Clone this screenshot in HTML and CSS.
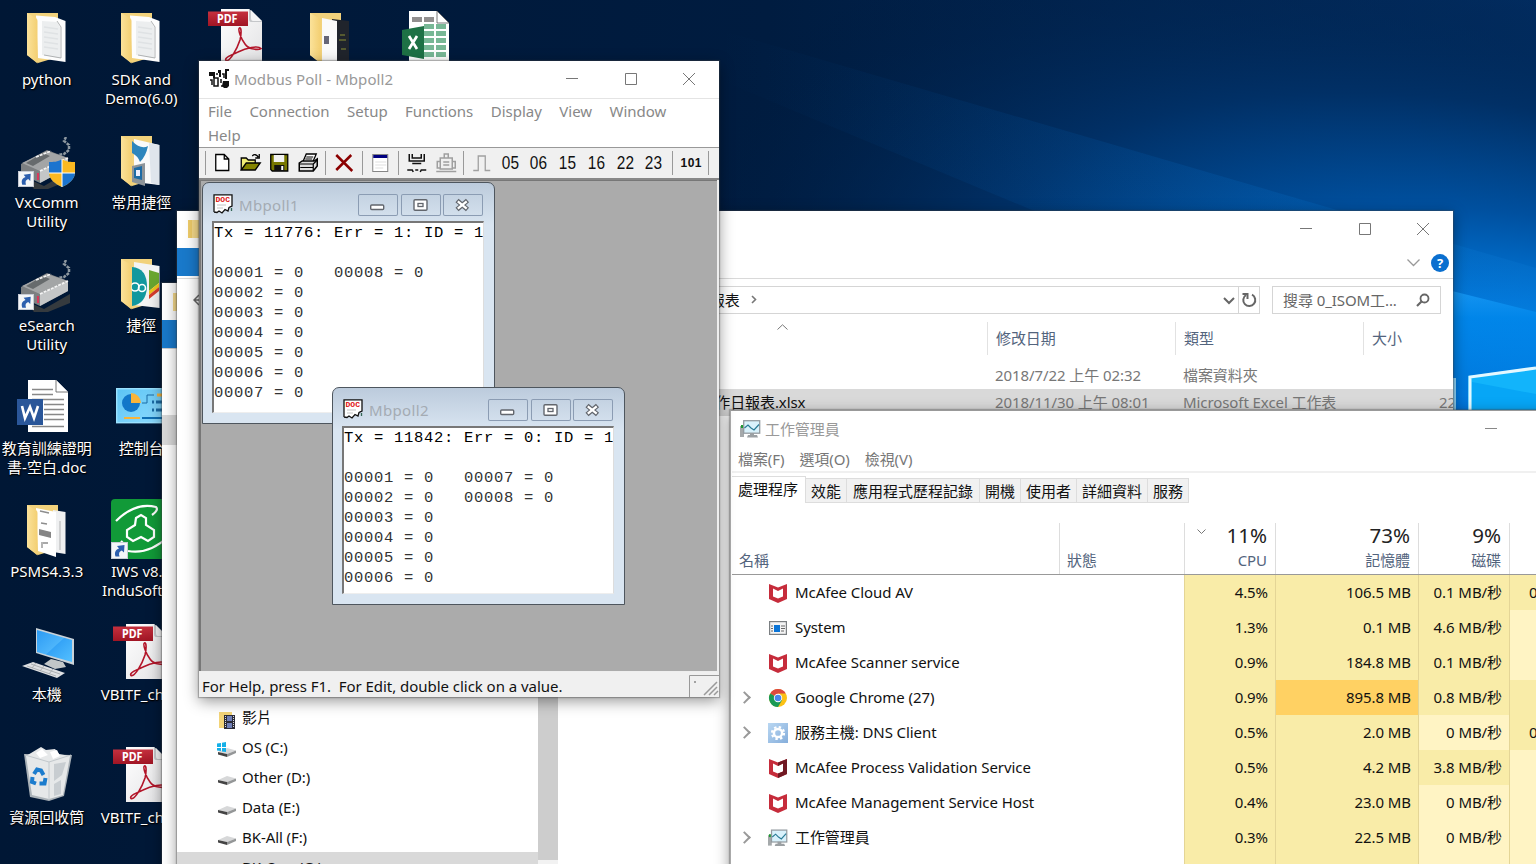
FILE: index.html
```html
<!DOCTYPE html>
<html lang="zh-Hant">
<head>
<meta charset="utf-8">
<title>Desktop</title>
<link rel="stylesheet" href="styles.css">
</head>
<body>
<svg class="defs" width="0" height="0" aria-hidden="true">
  <defs>
    <linearGradient id="gFolder" x1="0" x2="1"><stop offset="0" stop-color="#fbe29a"/><stop offset="1" stop-color="#f3cf72"/></linearGradient>
    <linearGradient id="gScreen" x1="0" y1="0" x2="1" y2="1"><stop offset="0" stop-color="#2b9af3"/><stop offset=".5" stop-color="#4db5fb"/><stop offset=".52" stop-color="#35a4f7"/><stop offset="1" stop-color="#54c0ff"/></linearGradient>
    <linearGradient id="gPage" x1="0" y1="0" x2="1" y2="1"><stop offset="0" stop-color="#fff"/><stop offset="1" stop-color="#e2e2e4"/></linearGradient>
    <linearGradient id="gPdf" x1="0" y1="0" x2="0" y2="1"><stop offset="0" stop-color="#c5303e"/><stop offset="1" stop-color="#a01524"/></linearGradient>
    <linearGradient id="gPanel" x1="0" y1="0" x2="1" y2="1"><stop offset="0" stop-color="#5cc4f4"/><stop offset="1" stop-color="#8fdcff"/></linearGradient>
    <linearGradient id="gGear" x1="0" y1="0" x2="1" y2="1"><stop offset="0" stop-color="#b9d7f2"/><stop offset="1" stop-color="#86aedb"/></linearGradient>
    <symbol id="shortcut" viewBox="0 0 17 17"><rect x=".5" y=".5" width="16" height="16" fill="#f4f6f8" stroke="#c9ced6"/><path d="M4.500 14.500C3 10 5 7.500 8 6.500L6 4L13.500 3L13 10.500L10.800 8.500C8 9.500 7.500 11.500 8.500 14.500Z" fill="#2c5fae"/></symbol>
    <symbol id="folderBack" viewBox="0 0 39 52"><path d="M0 0H31V44L11 50L0 42Z" fill="#f2d27c"/></symbol>
    <symbol id="folderFlap" viewBox="0 0 39 52"><path d="M0 0L9 5Q10.500 6 10.500 8V50.500L0 42Z" fill="url(#gFolder)"/></symbol>
    <symbol id="folder" viewBox="0 0 39 52"><use href="#folderBack"/><path d="M9 2.500L28 4L38.500 8V49L11 45Z" fill="#fdfdfd"/><path d="M15 8L30 9L33 14V45L15 42Z" fill="#eceeef"/><path d="M30 8L34 14V45L17 42" fill="none" stroke="#9d9fa1" stroke-width=".8"/><path d="M17 14L31 16M17 19L31 21M17 24L31 26M17 29L31 31M17 34L31 36" stroke="#dfe2e4" stroke-width="1.500"/><use href="#folderFlap"/></symbol>
    <symbol id="pdf" viewBox="0 0 54 56"><path d="M13 0H41L54.500 13V55H13Z" fill="url(#gPage)"/><path d="M41 0L54.500 13H43Q41 13 41 10Z" fill="#c5c7ca"/><path d="M43 1L54 12H45Q43 12 43 9Z" fill="#f4f4f5"/><rect y="2.500" width="40" height="14.500" fill="url(#gPdf)"/><text x="9" y="14" class="pdf-word" textLength="20.500" lengthAdjust="spacingAndGlyphs">PDF</text><path d="M31.500 19C29.500 20 33 30 37 35C41 41 51 41 53 39.500C50 36 38 39 30 43C23 46 16 49 18 51.500C22 53 29 40 32 31C33.500 25 33.500 18 31.500 19Z" fill="none" stroke="#b3162a" stroke-width="1.600"/></symbol>
    <symbol id="device" viewBox="0 0 52 52">
      <path d="M48 0L46 4L51 8L51 13L46 17L40 18" fill="none" stroke="#8d98a0" stroke-width="2.500" stroke-dasharray="3 1"/>
      <path d="M6 40L26 49L52 34V43L30 52H16Z" fill="#353a3e"/>
      <path d="M3 27L29 13L50 21V31L22 46L3 37Z" fill="#7c7f81"/><path d="M22 34L50 21V31L22 46Z" fill="#c4c6c7"/><path d="M4 26L29 14L50 21L22 34Z" fill="#a3a5a6"/><path d="M8 26L25 16L32 19L15 29Z" fill="#676b6d"/><path d="M22 34L50 21M18 20L33 14" stroke="#f3f3f3" stroke-width="1.700" stroke-dasharray="3 1"/><path d="M20 36V43" stroke="#d8385c" stroke-width="2"/>
      <use href="#shortcut" x="0" y="34" width="16" height="16"/>
    </symbol>
    <symbol id="shield" viewBox="0 0 26 28"><path d="M13 0C9 3 4 3 0 3V13C0 20 6 25 13 28V0Z" fill="#1b74cf"/><path d="M13 0C17 3 22 3 26 3V13C26 20 20 25 13 28V0Z" fill="#fbb921"/><path d="M0 14H13V28C6 25 0 20 0 14Z" fill="#fbb921"/><path d="M26 14H13V28C20 25 26 20 26 14Z" fill="#1b74cf"/><path d="M13 0V28M0 14H26" stroke="#fff" stroke-width="1"/></symbol>
    <symbol id="drive" viewBox="0 0 18 9"><path d="M0 4L9 0L18 2.500L9 6Z" fill="#d7d8d9"/><path d="M0 4L9 6V9L0 6.500Z" fill="#444"/><path d="M9 6L18 2.500V5L9 9Z" fill="#949697"/></symbol>
    <symbol id="shieldM" viewBox="0 0 18 20"><path d="M0 1L9 4.500L18 1V16L9 20L0 16Z" fill="#c62c3b"/><path d="M4 5.500L9 8L14 5.500V13.500L9 15.500L4 13.500Z" fill="#fff"/></symbol>
    <symbol id="taskIcon" viewBox="0 0 21 18"><path d="M0 6H4V17H0Z" fill="#a5a9ab"/><path d="M1 5H3V8H1Z" fill="#1e9b32"/><rect x="3.700" y=".7" width="16" height="12.500" fill="#d8f1fb" stroke="#939ba0" stroke-width="1.300"/><path d="M4.500 8L8 5L11 8L14 10L19 4.500" fill="none" stroke="#287b96" stroke-width="1.200"/><path d="M10 13H14V15H17L18 17.500H7L8 15H10Z" fill="#9ba0a3"/></symbol>
    <symbol id="docIcon" viewBox="0 0 20 20"><path d="M1 .8H19V12L16 13.500L15 17L12 15.500L9 19L6 17L4 18.500L1 18Z" fill="#fff"/><path d="M1 18V.8H19V12L16 13.500L15 17L12 15.500L9 19L6 17L4 18.500L1 18" fill="none" stroke="#111" stroke-width="1.300"/><text x="2.500" y="8" class="doc-word" textLength="14.500" lengthAdjust="spacingAndGlyphs">DOC</text><path d="M4 11H13M4 14H10" stroke="#c4c4c4"/><path d="M18.500 14V17" stroke="#365" stroke-width="1.300"/></symbol>
    <symbol id="mMin" viewBox="0 0 40 22"><rect x="12.700" y="11" width="13" height="4.500" rx="1" fill="#fff" stroke="#62666d" stroke-width="1.400"/></symbol>
    <symbol id="mMax" viewBox="0 0 40 22"><rect x="13" y="5.700" width="13" height="10.500" rx="1" fill="#fff" stroke="#62666d" stroke-width="1.400"/><rect x="17" y="9.500" width="5" height="3" fill="#fff" stroke="#62666d" stroke-width="1.300"/></symbol>
    <symbol id="mClose" viewBox="0 0 40 22"><path d="M14 6.500L24.500 15.500M24.500 6.500L14 15.500" stroke="#62666d" stroke-width="4.800"/><path d="M14.800 7.300L23.700 14.700M23.700 7.300L14.800 14.700" stroke="#fff" stroke-width="2.300"/></symbol>
  </defs>
</svg>

<div class="screen">
  <svg class="wallpaper" viewBox="0 0 1536 864">
    <defs>
      <radialGradient id="w1" gradientUnits="userSpaceOnUse" cx="1560" cy="390" r="900" gradientTransform="translate(1560 390) rotate(14) scale(1 .46) translate(-1560 -390)"><stop offset="0" stop-color="#00a2ff"/><stop offset=".2" stop-color="#0078dc"/><stop offset=".4" stop-color="#00509f"/><stop offset=".65" stop-color="#013066"/><stop offset="1" stop-color="#001a3c" stop-opacity="0"/></radialGradient>
      <linearGradient id="w2" x1="0" x2="1"><stop offset="0" stop-color="#001735"/><stop offset=".5" stop-color="#001c40"/><stop offset="1" stop-color="#023068"/></linearGradient>
      <linearGradient id="w3" x1="0" x2="1"><stop offset="0" stop-color="#0060b8" stop-opacity="0"/><stop offset="1" stop-color="#0a78d2" stop-opacity=".3"/></linearGradient>
      <linearGradient id="w4" x1="0" y1="0" x2="0" y2="1"><stop offset="0" stop-color="#27a9ff"/><stop offset=".3" stop-color="#0088ed"/><stop offset="1" stop-color="#006fd6"/></linearGradient>
    </defs>
    <rect width="1536" height="864" fill="url(#w2)"/>
    <rect width="1536" height="864" fill="url(#w1)"/>
    <path d="M720 30L1536 268V420L720 80Z" fill="url(#w3)"/>
    <path d="M1400 278L1536 312V412H1400Z" fill="url(#w4)" opacity=".75"/>
    <path d="M1453 378H1456V412H1453Z" fill="#8fd9ff"/>
    <path d="M1468 376L1536 367V412H1468Z" fill="#12b4fb"/>
    <path d="M1472 382L1536 394V412H1472Z" fill="#07a6f6"/>
    <path d="M1470 412V377L1536 368" fill="none" stroke="#e4f8ff" stroke-width="3"/>
  </svg>

  <div class="desktop">
    <div class="shortcut"><div class="pic"><svg class="i-folder" viewBox="0 0 39 52"><use href="#folder"/></svg></div><span>python</span></div>
    <div class="shortcut"><div class="pic"><svg class="i-folder" viewBox="0 0 39 52"><use href="#folder"/></svg></div><span>SDK and<br>Demo(6.0)</span></div>
    <div class="shortcut"><div class="pic"><svg class="i-pdf" viewBox="0 0 54 56"><use href="#pdf"/></svg></div></div>
    <div class="shortcut"><div class="pic"><svg class="i-folder" viewBox="0 0 39 52"><use href="#folderBack"/><path d="M22 6L39 8V52H22Z" fill="#20242c"/><path d="M30 22H35M29 27H36M31 36H36" stroke="#8a8f35"/><path d="M12 5L27 8V52H12Z" fill="#fafafa"/><rect x="14" y="23" width="5" height="8" fill="#667"/><use href="#folderFlap"/></svg></div></div>
    <div class="shortcut"><div class="pic"><svg class="i-xls" viewBox="0 0 47 52"><path d="M7 0H35L47 12V52H7Z" fill="#fff"/><path d="M35 0V12H47Z" fill="#fff" stroke="#555" stroke-width=".8"/><path d="M10 6H20V11H10ZM22 6H32V11H22Z" fill="#928f8f"/><path d="M22 13H32V18H22ZM34 13H44V18H34ZM22 20H32V25H22ZM34 20H44V25H34ZM22 27H32V32H22ZM34 27H44V32H34ZM22 34H32V39H22ZM34 34H44V39H34ZM22 41H32V46H22ZM34 41H44V46H34Z" fill="#77b795"/><path d="M0 19L22 15V48L0 44Z" fill="#1e7145"/><path d="M7 25L15 38M15 25L7 38" stroke="#fff" stroke-width="2.700"/></svg></div></div>

    <div class="shortcut"><div class="pic"><svg class="i-device" viewBox="0 0 58 52"><use href="#device" width="54" height="52"/><use href="#shield" x="32" y="22" width="26" height="28"/></svg></div><span>VxComm<br>Utility</span></div>
    <div class="shortcut"><div class="pic"><svg class="i-folder" viewBox="0 0 39 52"><use href="#folderBack"/><path d="M13 3L38.500 9V49L13 46Z" fill="#fafafa"/><path d="M28 7L38 9V49L30 47Z" fill="#dfe5ec"/><path d="M11 5Q20 14 27 10Q25 20 19 26Q17 20 11 17Z" fill="#2e86bd"/><path d="M11 30L24 27V50L11 46Z" fill="#8e9499"/><path d="M13 32L21 30V44L13 42Z" fill="#1d6ba5"/><path d="M15 34H19V40H15Z" fill="#eef"/><use href="#folderFlap"/></svg></div><span>常用捷徑</span></div>
    <i></i><i></i><i></i>

    <div class="shortcut"><div class="pic"><svg class="i-device" viewBox="0 0 58 52"><use href="#device" width="54" height="52"/></svg></div><span>eSearch<br>Utility</span></div>
    <div class="shortcut"><div class="pic"><svg class="i-folder" viewBox="0 0 39 52"><use href="#folderBack"/><path d="M13 3L38.500 7V49L13 46Z" fill="#f4f4f4"/><path d="M28 11L38 14V24L28 32Z" fill="#69a52f"/><path d="M28 32L38 24V28L28 36Z" fill="#f0c419"/><path d="M28 36L38 28V32L28 40Z" fill="#d83b2b"/><path d="M11 8Q26 9 26 28Q25 45 11 47Z" fill="#12989e"/><circle cx="14" cy="28" r="4" fill="none" stroke="#fff" stroke-width="1.600"/><circle cx="21" cy="29" r="3.500" fill="none" stroke="#fff" stroke-width="1.600"/><use href="#folderFlap"/></svg></div><span>捷徑</span></div>
    <i></i><i></i><i></i>

    <div class="shortcut"><div class="pic"><svg class="i-doc" viewBox="0 0 51 52"><path d="M11 0H39L51 12V52H11Z" fill="#fff"/><path d="M39 0V12H51" fill="#fff" stroke="#555" stroke-width=".8"/><path d="M15 9.500H36M15 14.500H36M15 19.500H47M27 24.500H47M27 29.500H47M27 34.500H47M27 39.500H47M15 46.500H47" stroke="#888" stroke-width="1.400"/><rect y="19" width="26" height="26" fill="#2a5699"/><path d="M5 26L8 38L13 27L17 38L21 26" fill="none" stroke="#fff" stroke-width="2.600"/></svg></div><span>教育訓練證明<br>書-空白.doc</span></div>
    <div class="shortcut"><div class="pic"><svg class="i-control" viewBox="0 0 50 36"><rect x=".7" y=".7" width="49" height="34" fill="url(#gPanel)" stroke="#9be2ff" stroke-width="1.400"/><circle cx="15" cy="15" r="9" fill="#1277c9"/><path d="M15 15V5A10 10 0 0 1 25 15Z" fill="#f8b43a"/><path d="M26 15H31V7H38M31 15" stroke="#1b6ca6" fill="none"/><path d="M41 7H48" stroke="#f8b43a" stroke-width="3"/><path d="M36 14H38M40 14H48M36 22H38M40 22H48" stroke="#1b6ca6" stroke-width="3"/><path d="M8 30H24" stroke="#f8b43a" stroke-width="2"/><path d="M26 30H46" stroke="#0f6fb5" stroke-width="2"/></svg></div><span>控制台</span></div>
    <i></i><i></i><i></i>

    <div class="shortcut"><div class="pic"><svg class="i-folder" viewBox="0 0 39 52"><use href="#folderBack"/><path d="M26 5L38.500 7V49L26 47Z" fill="#eff0f1"/><path d="M33 16V45" stroke="#999" stroke-width=".7"/><path d="M9 3L29 7V52L11 46Z" fill="#fff"/><path d="M13 6L22 8M14 18L20 19M15 37V43M16 38H21" stroke="#8d8d8d" stroke-width="1.300"/><path d="M12 24L24 27V33L12 30Z" fill="#858585"/><use href="#folderFlap"/></svg></div><span>PSMS4.3.3</span></div>
    <div class="shortcut"><div class="pic"><svg class="i-iws" viewBox="0 0 60 60"><rect width="60" height="60" rx="4" fill="#119a38"/><path d="M5 22Q24 3 45 8Q48 11 41 16M17 52Q38 56 58 37M10 42L13 45" fill="none" stroke="#fff" stroke-width="2.200"/><path d="M25 19L30 16L35 19V26L43 31V38L37 42L30 38L22 42L16 38V31L24 26Z" fill="none" stroke="#fff" stroke-width="2.200"/><use href="#shortcut" y="43" width="17" height="17"/></svg></div><span>IWS v8.0<br>InduSoft W</span></div>
    <i></i><i></i><i></i>

    <div class="shortcut"><div class="pic"><svg class="i-pc" viewBox="0 0 53 50"><path d="M14 0L52 11V37L14 25Z" fill="#c9d2d8"/><path d="M15 2L50 12V34L15 24Z" fill="url(#gScreen)"/><path d="M29 31L41 34L44 39L33 41L22 36Z" fill="#c1c6c8"/><path d="M0 38L11 34L43 45L35 50Z" fill="#dfe1e3"/><path d="M5 38L34 48M9 36L38 46M10 40L14 35M18 43L22 38M27 46L31 41" stroke="#a1a4a7" stroke-width=".8"/></svg></div><span>本機</span></div>
    <div class="shortcut"><div class="pic"><svg class="i-pdf" viewBox="0 0 54 56"><use href="#pdf"/></svg></div><span>VBITF_chan</span></div>
    <i></i><i></i><i></i>

    <div class="shortcut"><div class="pic"><svg class="i-bin" viewBox="0 0 48 54"><path d="M0 7L48 8L40 49L25 54L6 50Z" fill="#aab2b8"/><path d="M2 9L12 3L17 0L22 3L31 2L35 7L46 9L39 48L25 52L8 48Z" fill="#e6e8e9"/><path d="M1 8L25 15L47 8M25 15V53" stroke="#c2c8cc" fill="none"/><path d="M12 6L18 2L24 8L16 11ZM26 5L33 3L36 9L29 12Z" fill="#fff"/><path d="M30 17L42 15L38 28L30 34ZM30 37L37 33V47L30 49Z" fill="#c8cdd1"/><path d="M10 27L13 22.500L17 23.500L19.500 28M21.500 31L20.500 36.500H15.500M12 36.500L8 35L8.500 30" fill="none" stroke="#1c7ccd" stroke-width="4"/></svg></div><span>資源回收筒</span></div>
    <div class="shortcut"><div class="pic"><svg class="i-pdf" viewBox="0 0 54 56"><use href="#pdf"/></svg></div><span>VBITF_chan</span></div>
  </div>

  <section class="window rear">
    <div class="rear-title"><svg width="14" height="18"><path d="M0 0H14V18H0Z" fill="#f6da8c"/></svg></div>
    <div class="rear-ribbon"></div>
    <div class="rear-gap"></div>
    <div class="rear-selected"></div>
  </section>

  <section class="window explorer">
    <header class="ex-title">
      <svg width="15" height="18"><path d="M0 0H15V18H0Z" fill="#f7db8b"/><path d="M0 0H4V18H0Z" fill="#eecb69"/></svg>
      <div class="controls">
        <svg width="12" height="12"><path d="M0 5.500H12"/></svg><svg width="12" height="12"><path d="M.5 .5H11.500V11.500H.5Z"/></svg><svg width="12" height="12"><path d="M0 0L12 12M12 0L0 12"/></svg>
      </div>
    </header>
    <div class="ex-ribbon"><b></b><svg width="13" height="8"><path d="M.5 .5L6.500 6.500L12.500 .5" fill="none" stroke="#999" stroke-width="1.300"/></svg><span class="help">?</span></div>
    <div class="ex-address">
      <svg class="back" width="12" height="12"><path d="M6 1L1 6L6 11M1 6H12" fill="none" stroke="#666" stroke-width="1.500"/></svg>
      <div class="path"><span>工作日報表</span><svg class="crumb" width="6" height="9"><path d="M1 1L4.500 4.500L1 8" fill="none" stroke="#777" stroke-width="1.600"/></svg><svg class="drop" width="12" height="8"><path d="M1 1L6 6L11 1" fill="none" stroke="#666" stroke-width="2"/></svg><svg class="reload" width="20" height="18" viewBox="0 0 20 18"><path d="M7 4.500A6 6 0 1 0 13 4.200" fill="none" stroke="#666" stroke-width="2"/><path d="M3.500 3.500H8.500V8.500" fill="none" stroke="#666" stroke-width="2"/></svg></div>
      <div class="search"><span>搜尋 0_ISOM工...</span><svg width="14" height="14"><circle cx="8.500" cy="5.500" r="4" fill="none" stroke="#666" stroke-width="1.800"/><path d="M6 8L1 13" stroke="#666" stroke-width="2.200"/></svg></div>
    </div>
    <div class="ex-body">
      <nav>
        <div><svg width="17" height="17" viewBox="0 0 17 17"><path d="M0 0H13V16H0Z" fill="#f3d478"/><path d="M5 3H16V17H5Z" fill="#2b2b38"/><path d="M8 4H13V9H8ZM8 11H13V16H8Z" fill="#6f7fb7"/><path d="M6.500 4V16M14.500 4V16" stroke="#ddd" stroke-dasharray="1 1"/></svg>影片</div>
        <div><svg width="19" height="16" viewBox="0 0 19 16"><use href="#drive" x="1" y="6" width="18" height="9"/><path d="M0 1.500L4 1V5H0ZM5 .8L9 0V5H5ZM0 6H4V9L0 8.500ZM5 6H9V10L5 9.500Z" fill="#14b0e8"/></svg>OS (C:)</div>
        <div><svg width="18" height="9"><use href="#drive"/></svg>Other (D:)</div>
        <div><svg width="18" height="9"><use href="#drive"/></svg>Data (E:)</div>
        <div><svg width="18" height="9"><use href="#drive"/></svg>BK-All (F:)</div>
        <div class="current"><svg width="18" height="9"><use href="#drive"/></svg>BK-One (G:)</div>
      </nav>
      <div class="ex-scroll"><i></i></div>
      <div class="ex-files">
        <div class="file-row head"><span><svg width="11" height="6"><path d="M.5 5.500L5.500 .8L10.500 5.500" fill="none" stroke="#777"/></svg></span><span>修改日期</span><span>類型</span><span>大小</span></div>
        <div class="file-row"><span></span><span>2018/7/22 上午 02:32</span><span>檔案資料夾</span><span></span></div>
        <div class="file-row picked"><span>ISOM工作日報表.xlsx</span><span>2018/11/30 上午 08:01</span><span>Microsoft Excel 工作表</span><span>22 KB</span></div>
      </div>
    </div>
  </section>

  <section class="window taskmgr">
    <header><svg width="21" height="18"><use href="#taskIcon"/></svg><span>工作管理員</span><svg class="min" width="12" height="2"><path d="M0 .5H12" stroke="#888"/></svg></header>
    <div class="tm-menu"><span>檔案(F)</span><span>選項(O)</span><span>檢視(V)</span></div>
    <div class="tm-tabs"><span class="on">處理程序</span><span>效能</span><span>應用程式歷程記錄</span><span>開機</span><span>使用者</span><span>詳細資料</span><span>服務</span></div>
    <div class="tm-row tm-head"><span class="name">名稱</span><span class="state">狀態</span><span class="num"><svg width="9" height="6"><path d="M.5 .5L4.500 4.500L8.500 .5" fill="none" stroke="#777"/></svg><b>11%</b>CPU</span><span class="num"><b>73%</b>記憶體</span><span class="num"><b>9%</b>磁碟</span><span class="num"></span></div>
    <div class="tm-row"><span class="name"><i></i><svg width="18" height="20"><use href="#shieldM"/></svg>McAfee Cloud AV</span><span></span><span class="num">4.5%</span><span class="num">106.5 MB</span><span class="num">0.1 MB/秒</span><span class="num net">0.1 Mbps</span></div>
    <div class="tm-row"><span class="name"><i></i><svg width="18" height="14" viewBox="0 0 18 14"><rect x=".6" y=".6" width="16.800" height="12.800" fill="#f4f4f4" stroke="#7b7f82" stroke-width="1.200"/><rect x="5" y="4" width="6" height="7" fill="#0a74d6"/><path d="M2 5H4M2 7.500H4M2 10H4M12 5H16M12 7.500H16M12 10H15" stroke="#666"/></svg>System</span><span></span><span class="num">1.3%</span><span class="num">0.1 MB</span><span class="num">4.6 MB/秒</span><span class="num net low"></span></div>
    <div class="tm-row"><span class="name"><i></i><svg width="18" height="20"><use href="#shieldM"/></svg>McAfee Scanner service</span><span></span><span class="num">0.9%</span><span class="num">184.8 MB</span><span class="num">0.1 MB/秒</span><span class="num net low"></span></div>
    <div class="tm-row"><span class="name"><i class="more"></i><svg width="18" height="18" viewBox="0 0 18 18"><circle cx="9" cy="9" r="9" fill="#fbc116"/><path d="M9 9L1.200 4.500A9 9 0 0 1 16.800 4.500H9Z" fill="#dd4b3e"/><path d="M9 9L1.200 4.500A9 9 0 0 0 9 18L13 11.300Z" fill="#1a9a55"/><circle cx="9" cy="9" r="4.200" fill="#fff"/><circle cx="9" cy="9" r="3.300" fill="#4a87ea"/></svg>Google Chrome (27)</span><span></span><span class="num">0.9%</span><span class="num hot">895.8 MB</span><span class="num">0.8 MB/秒</span><span class="num net"></span></div>
    <div class="tm-row"><span class="name"><i class="more"></i><svg width="20" height="20" viewBox="0 0 20 20"><rect width="20" height="20" fill="url(#gGear)"/><circle cx="10" cy="10" r="4.100" fill="none" stroke="#fff" stroke-width="2.500"/><circle cx="10" cy="10" r="6" fill="none" stroke="#fff" stroke-width="2.200" stroke-dasharray="2.400 2.312"/></svg>服務主機: DNS Client</span><span></span><span class="num">0.5%</span><span class="num">2.0 MB</span><span class="num low">0 MB/秒</span><span class="num net">0.1 Mbps</span></div>
    <div class="tm-row"><span class="name"><i></i><svg width="18" height="20" viewBox="0 0 18 20"><use href="#shieldM"/><path d="M9 4.500L18 1V16L9 20V15.500L14 13.500V5.500L9 8Z" fill="#701923"/></svg>McAfee Process Validation Service</span><span></span><span class="num">0.5%</span><span class="num">4.2 MB</span><span class="num">3.8 MB/秒</span><span class="num net low"></span></div>
    <div class="tm-row"><span class="name"><i></i><svg width="18" height="20"><use href="#shieldM"/></svg>McAfee Management Service Host</span><span></span><span class="num">0.4%</span><span class="num">23.0 MB</span><span class="num low">0 MB/秒</span><span class="num net low"></span></div>
    <div class="tm-row"><span class="name"><i class="more"></i><svg width="21" height="18"><use href="#taskIcon"/></svg>工作管理員</span><span></span><span class="num">0.3%</span><span class="num">22.5 MB</span><span class="num low">0 MB/秒</span><span class="num net low"></span></div>
    <div class="tm-row"><span></span><span></span><span class="num"></span><span class="num"></span><span class="num low"></span><span class="num net low"></span></div>
  </section>

  <section class="window modbus">
    <header class="mb-title">
      <svg width="21" height="20" viewBox="0 0 21 20"><path d="M0 3H6V7H0ZM4 6H6V9H4ZM9 1H12V8H10V4H9ZM16 0H20V2H18V10H16ZM14 12H20V17L18 19H15L13 17Z" fill="#111"/><path d="M1 11H3V16M5 9H9V17H5ZM7 5H9M12 10V14M13 5H15V9M12 17H15" fill="none" stroke="#111" stroke-width="1.500"/></svg>
      <span>Modbus Poll - Mbpoll2</span>
      <div class="controls"><svg width="12" height="12"><path d="M0 5.500H12"/></svg><svg width="12" height="12"><path d="M.5 .5H11.500V11.500H.5Z"/></svg><svg width="12" height="12"><path d="M0 0L12 12M12 0L0 12"/></svg></div>
    </header>
    <div class="mb-menu"><span>File</span><span>Connection</span><span>Setup</span><span>Functions</span><span>Display</span><span>View</span><span>Window</span><span>Help</span></div>
    <div class="mb-tools">
      <i></i>
      <svg viewBox="0 0 28 28"><path d="M7.500 5.500H16L20.500 10V21.500H7.500ZM16 5.500V10H20.500" fill="#fff" stroke="#000" stroke-width="1.300"/></svg>
      <svg viewBox="0 0 28 28"><path d="M4 21V9H9L11 11H18V14" fill="#f1ee75" stroke="#000" stroke-width="1.300"/><path d="M4 21L9 14H23L18 21Z" fill="#858500" stroke="#000" stroke-width="1.300"/><path d="M15 7Q18 4 21 8M22 5V9H18" fill="none" stroke="#000" stroke-width="1.300"/></svg>
      <svg viewBox="0 0 28 28"><path d="M5.500 5.500H22.500V22H7L5.500 20.500Z" fill="#777700" stroke="#000" stroke-width="1.300"/><path d="M8.500 6H19V13H8.500Z" fill="#f2f2f2"/><path d="M9 16H19V22H9Z" fill="#111"/><path d="M16 17H18V21H16Z" fill="#fff"/></svg>
      <svg viewBox="0 0 28 28"><path d="M9 12L12 5H22L19 12" fill="#fff" stroke="#000" stroke-width="1.300"/><path d="M12 8H19M11 10H18" stroke="#000"/><path d="M5 14L8 12H20L23 10V17L19 22H5Z" fill="#ddd" stroke="#000" stroke-width="1.500"/><path d="M5 15H19V22M19 15L23 11M6 18.500H19" fill="none" stroke="#000" stroke-width="1.200"/></svg>
      <i></i>
      <svg viewBox="0 0 28 28"><path d="M6 6L22 22M21 6L6 21" stroke="#8b0000" stroke-width="2.500"/></svg>
      <i></i>
      <svg viewBox="0 0 28 28"><rect x="5.500" y="5.500" width="15" height="17" fill="#fff" stroke="#858585"/><rect x="6" y="6" width="14" height="3" fill="#000080"/><path d="M8 13H19M8 16H19M8 19H16" stroke="#dfdfdf"/></svg>
      <i></i>
      <svg viewBox="0 0 28 28"><path d="M6 5V12H21V5M9 5V9H18V5M9 14.500H18" fill="none" stroke="#111" stroke-width="1.500"/><path d="M4 21H9L10 23M23 21H18L17 23M12 21H15" fill="none" stroke="#111" stroke-width="1.500"/></svg>
      <svg viewBox="0 0 28 28"><path d="M12 5H16V9H12ZM8 9H20V20H8ZM8 12.500H5V19H8M20 12.500H23V19H20M11 13H17M11 16H17M4 22.500H24" fill="none" stroke="#9f9f9f" stroke-width="1.500"/></svg>
      <i></i>
      <svg viewBox="0 0 28 28"><path d="M5 21.500H10V7H17V21.500H22" fill="none" stroke="#a0a0a0" stroke-width="1.300"/></svg>
      <span>05</span><span>06</span><span>15</span><span>16</span><span>22</span><span>23</span>
      <i></i><strong>101</strong><i></i>
    </div>
    <div class="mb-area">
      <article class="poll first">
        <header><svg width="20" height="20"><use href="#docIcon"/></svg><span>Mbpoll1</span><div class="mdi"><svg width="40" height="22"><use href="#mMin"/></svg><svg width="40" height="22"><use href="#mMax"/></svg><svg width="40" height="22"><use href="#mClose"/></svg></div></header>
<pre><b>Tx = 11776: Err = 1: ID = 1</b>

00001 = 0   00008 = 0
00002 = 0
00003 = 0
00004 = 0
00005 = 0
00006 = 0
00007 = 0</pre>
      </article>
      <article class="poll second">
        <header><svg width="20" height="20"><use href="#docIcon"/></svg><span>Mbpoll2</span><div class="mdi"><svg width="40" height="22"><use href="#mMin"/></svg><svg width="40" height="22"><use href="#mMax"/></svg><svg width="40" height="22"><use href="#mClose"/></svg></div></header>
<pre><b>Tx = 11842: Err = 0: ID = 1</b>

00001 = 0   00007 = 0
00002 = 0   00008 = 0
00003 = 0
00004 = 0
00005 = 0
00006 = 0</pre>
      </article>
    </div>
    <footer class="mb-status"><span>For Help, press F1.&nbsp; For Edit, double click on a value.</span><svg width="30" height="22"><path d="M.5 22V.5H30" fill="none" stroke="#999"/><path d="M6 6V8" stroke="#555"/><path d="M15 20L28 7M20 20L28 12M25 20L29 16" stroke="#999" stroke-width="1.500"/></svg></footer>
  </section>
</div>
</body>
</html>
```
FILE: styles.css
```css
* { box-sizing: border-box; }
body {
  margin: 0;
  overflow: hidden;
  font: 15px/20px "Noto Sans", "Noto Sans CJK TC", sans-serif;
  letter-spacing: -0.08px;
  color: #111;
}
svg { flex: none; display: block; }
.defs { position: absolute; }
.screen { position: relative; width: 1536px; height: 864px; overflow: hidden; background: #001735; }
.wallpaper { position: absolute; width: 1536px; height: 864px; }
.pdf-word { font: bold 12px "Noto Sans", sans-serif; fill: #fff; letter-spacing: 0; }
.doc-word { font: bold 7px "Liberation Mono", monospace; fill: #e01010; letter-spacing: 0; }

/* Desktop shortcuts */
.desktop { position: absolute; top: 7px; left: -.5px; display: grid; grid-template-columns: repeat(5, 94.5px); grid-auto-rows: 123px; letter-spacing: 0; }
.shortcut { display: flex; flex-direction: column; align-items: center; text-align: center; white-space: nowrap; }
.shortcut span { width: 94px; color: #fff; line-height: 19px; text-shadow: 1px 1px 2px #000, 0 1px 1px #000; display: flex; justify-content: center; }
.pic { width: 60px; height: 63px; display: flex; align-items: flex-start; }
.i-folder { width: 39px; height: 52px; margin: 6px 0 0 10px; }
.i-pdf { width: 54px; height: 56px; margin: 2px 0 0 2px; }
.i-xls { width: 47px; height: 52px; margin: 4px 0 0 7px; }
.i-device { width: 58px; height: 52px; margin: 7px 0 0 0; }
.i-doc { width: 51px; height: 52px; margin: 4px 0 0 0; }
.i-control { width: 50px; height: 36px; margin: 12px 0 0 5px; }
.i-iws { width: 60px; height: 60px; margin: 0; }
.i-pc { width: 53px; height: 50px; margin: 6px 0 0 5px; }
.i-bin { width: 48px; height: 54px; margin: 2px 0 0 7px; }

/* Windows */
.window { position: absolute; display: flex; flex-direction: column; background: #fff; box-shadow: 0 4px 14px rgba(0, 0, 0, .42), 0 0 1px 1px rgba(80, 80, 80, .35); }
.controls { margin-left: auto; display: flex; gap: 46.5px; align-items: center; }
.controls path { fill: none; stroke: #777; }

.rear { left: 162px; top: 283px; width: 900px; height: 620px; }
.rear-title { height: 37px; padding: 10px 0 0 11px; }
.rear-ribbon { height: 29px; background: #1979ca; border-bottom: 1px solid #ccc; }
.rear-gap { height: 66px; }
.rear-selected { height: 30px; background: #d9d9d9; }

.explorer { left: 177px; top: 211px; width: 1276px; height: 671px; }
.ex-title { height: 37px; display: flex; align-items: center; padding: 0 24px 1px 11px; }
.ex-ribbon { height: 31px; display: flex; align-items: center; border-bottom: 1px solid #d9d9d9; padding-right: 4px; }
.ex-ribbon b { align-self: flex-start; width: 70px; height: 28px; background: #1979ca; margin-right: auto; }
.help { width: 18px; height: 18px; margin-left: 11px; border-radius: 50%; background: #0a6fcf; color: #fff; font: bold 13px/18px "Noto Sans", sans-serif; text-align: center; }
.ex-address { height: 42px; padding: 7px 12px 7px 16px; display: flex; align-items: center; gap: 12px; }
.path, .search { height: 28px; padding-bottom: 1px; border: 1px solid #d5d5d5; display: flex; align-items: center; }
.path { flex: 1; padding-left: 447px; }
.crumb { margin-left: 11px; }
.drop { margin: 2px 3px 0 auto; }
.reload { border-left: 1px solid #d5d5d5; width: 21px; height: 27px; padding: 4px 0; }
.search { width: 169px; padding: 0 10px 1px; justify-content: space-between; color: #666; }
.ex-body { flex: 1; display: flex; }
.ex-body nav { width: 361px; flex: none; display: flex; flex-direction: column; justify-content: flex-end; }
.ex-body nav div { height: 30px; display: grid; grid-template-columns: 65px 1fr; align-items: center; }
.ex-body nav svg { justify-self: end; margin: 6px 6px 0 0; }
.ex-body nav .current { background: #d9d9d9; }
.ex-scroll { width: 20px; flex: none; padding-bottom: 22px; background: #f2f2f2; }
.ex-scroll i { display: block; height: 100%; background: #cdcdcd; }
.ex-files { flex: 1; min-width: 0; }
.file-row { height: 27px; padding-bottom: 1px; display: grid; grid-template-columns: 429px 188px 188px 1fr; align-items: center; color: #777; white-space: nowrap; overflow: hidden; }
.file-row span { padding-left: 8px; }
.file-row span:last-child { padding-left: 76px; }
.file-row.head { height: 41px; padding-bottom: 7px; color: #53647d; }
.head span { height: 33px; padding-top: 6px; border-left: 1px solid #e2e2e2; }
.file-row.head span:first-child { border: 0; padding: 2px 0 0 219px; }
.file-row.head span:last-child { padding-left: 8px; }
.picked { background: #d9d9d9; }
.file-row.picked span:first-child { padding-left: 104px; color: #111; }

/* Task manager */
.taskmgr { left: 730px; top: 410px; width: 830px; height: 480px; padding-left: 1px; border-left: 1px solid #aaa; border-top: 1px solid #999; }
.taskmgr header { height: 36px; display: flex; align-items: center; padding-left: 8px; gap: 4px; color: #999; }
.min { margin: 0 63px 0 auto; }
.tm-menu { height: 26px; display: flex; gap: 15px; padding: 2px 0 0 6px; color: #777; border-bottom: 2px solid #f0f0f0; }
.tm-tabs { height: 30px; padding-top: 5px; display: flex; align-items: flex-end; letter-spacing: 0; }
.tm-tabs span { height: 25px; padding: 2px 5px; border: 1px solid #ddd; border-left: 0; background: #f1f1f1; }
.tm-tabs .on { height: 27px; padding: 2px 7px 4px 6px; background: #fff; border-bottom: 0; }
.tm-tabs span:nth-child(3) { padding: 2px 6px; }
.tm-row { height: 35px; flex: none; display: grid; grid-template-columns: 327px 125px 91px 143px 91px 60px; line-height: 35px; white-space: nowrap; }
.name { display: flex; align-items: center; }
.name i { width: 36px; flex: none; }
.name svg { margin-right: 7px; width: 20px; }
.more::before { content: ""; display: block; width: 7px; height: 7px; margin-left: 8px; border: solid #999; border-width: 2px 2px 0 0; transform: rotate(45deg); }
.num { text-align: right; padding-right: 7px; background: #f9eca8; border-left: 1px solid #e4d596; }
.num.low { background: #fff4c4; }
.num.hot { background: #ffd163; }
.num.net { text-align: left; padding-left: 19px; overflow: hidden; }
.tm-head { height: 72px; padding-top: 20px; border-bottom: 1px solid #999; color: #53647d; line-height: 20px; }
.tm-head .name { align-items: flex-start; padding: 27px 0 0 7px; }
.tm-head .state { padding: 27px 0 0 7px; border-left: 1px solid #ddd; }
.tm-head .num { position: relative; background: #fff; border-color: #ddd; padding-right: 8px; }
.tm-head b { display: block; height: 27px; font-size: 20.5px; line-height: 24px; font-weight: 400; color: #222; letter-spacing: 0; }
.tm-head svg { position: absolute; left: 12px; top: 6px; }

/* Modbus Poll */
.modbus { left: 199px; top: 61px; width: 520px; height: 636px; background: #f0f0f0; }
.mb-title { height: 38px; display: flex; align-items: center; padding: 0 24px 1px 10px; gap: 4px; background: #fff; border-bottom: 1px solid #e4e4e4; color: #999; letter-spacing: .08px; }
.mb-menu { height: 48px; display: flex; flex-wrap: wrap; align-content: flex-start; column-gap: 17.5px; padding: 0 20px 0 9px; line-height: 24px; background: #fff; color: #888; letter-spacing: -.02px; }
.mb-tools { height: 33px; display: flex; align-items: center; border-top: 1px solid #999; border-bottom: 2px solid #888; }
.mb-tools svg { width: 28.500px; height: 28px; }
.mb-tools i { width: 1px; height: 24px; margin: 0 4px 0 3px; background: #999; }
.mb-tools i:first-child { margin-left: 6px; margin-right: 2px; }
.mb-tools span { width: 28.800px; text-align: center; font: 17.5px/28px "Liberation Sans", sans-serif; letter-spacing: 0; transform: translateX(-1px) scaleX(.88); }
.mb-tools strong { width: 28px; text-align: center; font: bold 12px/28px "Liberation Sans", sans-serif; letter-spacing: .5px; }
.mb-area { position: relative; height: 492px; background: #ababab; border: solid #eee; border-width: 0 2px 1px 0; box-shadow: inset 2px 1px 0 #777; }
.poll { position: absolute; width: 293px; padding: 9px 10px 10px 9px; border: 1px solid #4e565e; border-radius: 7px 7px 0 0; background: linear-gradient(#bccbdc, #d9e5f1 42px); }
.first { left: 3px; top: 2px; height: 242px; }
.second { left: 133px; top: 207px; height: 218px; }
.poll header { height: 29px; display: flex; align-items: flex-start; color: #a4abb3; }
.poll header > svg { margin: 2px 6px 0 1px; }
.poll header span { margin-top: 3px; letter-spacing: .35px; }
.mdi { margin: 2px 1px 0 auto; display: flex; gap: 2.500px; }
.mdi svg { box-shadow: inset 0 0 0 1px #8b9cb3; border-radius: 2px; }
.poll pre { height: calc(100% - 29px); margin: 0; overflow: hidden; background: #fff; border: solid; border-width: 2px 1px 1px 2px; border-color: #777 #ddd #eee #777; font: 15.500px/20px "Liberation Mono", monospace; letter-spacing: .7px; color: #333; }
.poll pre b { font-weight: 400; color: #000; }
.mb-status { height: 25px; display: flex; justify-content: space-between; padding: 3px 0 0 3px; line-height: 23px; letter-spacing: -.04px; }
```
